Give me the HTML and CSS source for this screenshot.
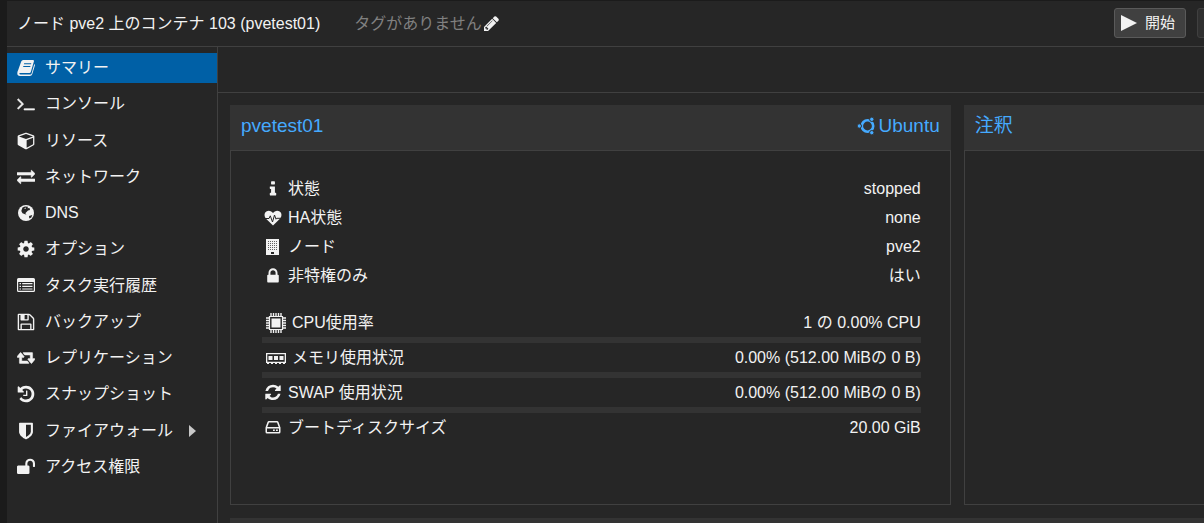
FILE: index.html
```html
<!DOCTYPE html>
<html lang="ja">
<head>
<meta charset="utf-8">
<meta name="viewport" content="width=device-width, initial-scale=1">
<title>pvetest01</title>
<link rel="stylesheet" href="styles.css">
</head>
<body>
<div class="app">
  <header class="header">
    <h1 class="title">ノード pve2 上のコンテナ 103 (pvetest01)</h1>
    <div class="tags">
      <span>タグがありません</span>
      <button class="tag-edit" type="button" aria-label="タグを編集"><svg class="icon-pencil" viewBox="128 128 1536 1536"><path d="M491 1536l91-91-235-235-91 91v107h128v128h107zm523-928q0-22-22-22-10 0-17 7l-542 542q-7 7-7 17 0 22 22 22 10 0 17-7l542-542q7-7 7-17zm-54-192l416 416-832 832h-416v-416zm683 96q0 53-37 90l-166 166-416-416 166-165q36-38 90-38 53 0 91 38l235 234q37 39 37 91z"/></svg></button>
    </div>
    <div class="actions">
      <button class="button" type="button"><svg class="icon-play" viewBox="0 0 16 16"><path d="M0 0L16 8L0 16z"/></svg>開始</button>
      <button class="button button-disabled" type="button" disabled aria-label="シャットダウン"><svg class="icon-play" viewBox="0 0 16 16"><path d="M4 3a7 7 0 1 0 8 0M8 0v8" fill="none" stroke="currentColor" stroke-width="2"/></svg></button>
    </div>
  </header>

  <nav class="nav">
    <a class="nav-item nav-selected" href="#summary"><svg class="icon" viewBox="0 0 18 18"><path fill-rule="evenodd" d="M6.200 1H16Q17.300 1 16.900 2.500L13.800 13Q13.500 14 12.500 14H3Q2.200 14 2.300 14.800Q2.500 15.500 3.500 15.500H13.300Q14.300 15.500 14.600 14.500L17.300 5Q18.200 5.500 17.800 6.800L15.300 15Q14.700 17 12.800 17H3Q.2 17 .3 14Q.4 12.500 1.200 11L4.200 2.500Q4.800 1 6.200 1zM7.200 4.300L6.900 5.300H14L14.300 4.300zM6.400 7L6.100 8H13.200L13.500 7z"/></svg>サマリー</a>
    <a class="nav-item" href="#console"><svg class="icon" viewBox="32 192 1728 1536"><path stroke="currentColor" stroke-width="60" d="M649 983l-466 466q-10 10-23 10t-23-10l-50-50q-10-10-10-23t10-23l393-393-393-393q-10-10-10-23t10-23l50-50q10-10 23-10t23 10l466 466q10 10 10 23t-10 23zm1079 457v64q0 14-9 23t-23 9h-960q-14 0-23-9t-9-23v-64q0-14 9-23t23-9h960q14 0 23 9t9 23z"/></svg>コンソール</a>
    <a class="nav-item" href="#resources"><svg class="icon" viewBox="0 64 1664 1792"><path d="M896 1629l640-349v-636l-640 233v752zm-64-865l698-254-698-254-698 254zm832-252v768q0 35-18 65t-49 47l-704 384q-28 16-61 16t-61-16l-704-384q-31-17-49-47t-18-65v-768q0-40 23-73t61-47l704-256q22-8 44-8t44 8l704 256q38 14 61 47t23 73z"/></svg>リソース</a>
    <a class="nav-item" href="#network"><svg class="icon" viewBox="0 64 1792 1792"><path stroke="currentColor" stroke-width="50" d="M1792 1184v192q0 13-9.500 22.500t-22.500 9.500h-1376v192q0 13-9.500 22.500t-22.500 9.500q-12 0-24-10l-319-320q-9-9-9-22 0-14 9-23l320-320q9-9 23-9 13 0 22.500 9.500t9.500 22.500v192h1376q13 0 22.500 9.500t9.500 22.500zm0-544q0 14-9 23l-320 320q-9 9-23 9-13 0-22.500-9.500t-9.500-22.500v-192h-1376q-13 0-22.500-9.500t-9.500-22.500v-192q0-13 9.500-22.500t22.500-9.500h1376v-192q0-14 9-23t23-9q12 0 24 10l319 319q9 9 9 23z"/></svg>ネットワーク</a>
    <a class="nav-item" href="#dns"><svg class="icon" viewBox="0 0 18 18"><circle cx="9" cy="9" r="8"/><path class="cut" d="M5.500 3.500L8 2.500L11 2.800L10.500 4.200L12.500 4L13 6L11 6.500L9.500 8L8.300 9.200L9.500 10.500L8 10.300L5.500 9.200L4.300 7L4.800 5.500zM12 12L15.300 11L14.300 13.400L12.300 14.400z"/><path d="M7 4.200L9 3.500L8.500 5z"/></svg>DNS</a>
    <a class="nav-item" href="#options"><svg class="icon" viewBox="64 64 1664 1664"><path d="M1152 896q0-106-75-181t-181-75-181 75-75 181 75 181 181 75 181-75 75-181zm512-109v222q0 12-8 23t-20 13l-185 28q-19 54-39 91 35 50 107 138 10 12 10 25t-9 23q-27 37-99 108t-94 71q-12 0-26-9l-138-108q-44 23-91 38-16 136-29 186-7 28-36 28h-222q-14 0-24.500-8.500t-11.500-21.500l-28-184q-49-16-90-37l-141 107q-10 9-25 9-14 0-25-11-126-114-165-168-7-10-7-23 0-12 8-23 15-21 51-66.500t54-70.500q-27-50-41-99l-183-27q-13-2-21-12.500t-8-23.500v-222q0-12 8-23t19-13l186-28q14-46 39-92-40-57-107-138-10-12-10-24 0-10 9-23 26-36 98.500-107.500t94.500-71.500q13 0 26 10l138 107q44-23 91-38 16-136 29-186 7-28 36-28h222q14 0 24.500 8.500t11.500 21.500l28 184q49 16 90 37l142-107q9-9 24-9 13 0 25 10 129 119 165 170 7 8 7 22 0 12-8 23-15 21-51 66.500t-54 70.500q26 50 41 98l183 28q13 2 21 12.500t8 23.500z"/></svg>オプション</a>
    <a class="nav-item" href="#tasks"><svg class="icon" viewBox="0 1 18 18"><path fill-rule="evenodd" d="M1.500 2H16.500Q18 2 18 3.500V14.500Q18 16 16.500 16H1.500Q0 16 0 14.500V3.500Q0 2 1.500 2zM1.200 6V14.300Q1.200 14.800 1.700 14.800H16.300Q16.800 14.800 16.800 14.300V6zM2.500 7H4V8.200H2.500zM5.200 7H15.500V8.200H5.200zM2.500 9.700H4V10.900H2.500zM5.200 9.700H15.500V10.900H5.200zM2.500 12.400H4V13.600H2.500zM5.200 12.400H15.500V13.600H5.200z"/></svg>タスク実行履歴</a>
    <a class="nav-item" href="#backup"><svg class="icon" viewBox="64 64 1664 1664"><path d="M512 1536h768v-384h-768v384zm896 0h128v-896q0-14-10-38.500t-20-34.500l-281-281q-10-10-34-20t-39-10v416q0 40-28 68t-68 28h-576q-40 0-68-28t-28-68v-416h-128v1280h128v-416q0-40 28-68t68-28h832q40 0 68 28t28 68v416zm-384-928v-320q0-13-9.500-22.500t-22.500-9.500h-192q-13 0-22.500 9.500t-9.500 22.500v320q0 13 9.500 22.500t22.500 9.500h192q13 0 22.500-9.500t9.500-22.500zm640 32v928q0 40-28 68t-68 28h-1344q-40 0-68-28t-28-68v-1344q0-40 28-68t68-28h928q40 0 88 20t76 48l280 280q28 28 48 76t20 88z"/></svg>バックアップ</a>
    <a class="nav-item" href="#replication"><svg class="icon" viewBox="0 64 1920 1792"><path stroke="currentColor" stroke-width="50" d="M1280 1504q0 13-9.500 22.500t-22.500 9.500h-960q-8 0-13.500-2t-9-7-5.500-8-3-11.500-1-11.500v-600h-192q-26 0-45-19t-19-45q0-24 15-41l320-384q19-22 49-22t49 22l320 384q15 17 15 41 0 26-19 45t-45 19h-192v384h576q16 0 25 11l160 192q7 10 7 21zm640-416q0 24-15 41l-320 384q-20 23-49 23t-49-23l-320-384q-15-17-15-41 0-26 19-45t45-19h192v-384h-576q-16 0-25-12l-160-192q-7-9-7-20 0-13 9.500-22.500t22.500-9.500h960q8 0 13.500 2t9 7 5.500 8 3 11.500 1 11.500v600h192q26 0 45 19t19 45z"/></svg>レプリケーション</a>
    <a class="nav-item" href="#snapshots"><svg class="icon" viewBox="64 64 1664 1664"><path d="M1664 896q0 156-61 298t-164 245-245 164-298 61q-172 0-327-72.500t-264-204.500q-7-10-6.500-22.500t8.500-20.500l137-138q10-9 25-9 16 2 23 12 73 95 179 147t225 52q104 0 198.500-40.500t163.500-109.500 109.500-163.500 40.500-198.500-40.500-198.500-109.500-163.500-163.500-109.500-198.500-40.500q-98 0-188 35.500t-160 101.500l137 138q31 30 14 69-17 40-59 40h-448q-26 0-45-19t-19-45v-448q0-42 40-59 39-17 69 14l130 129q107-101 244.500-156.500t284.500-55.500q156 0 298 61t245 164 164 245 61 298zm-640-288v448q0 14-9 23t-23 9h-320q-14 0-23-9t-9-23v-64q0-14 9-23t23-9h224v-352q0-14 9-23t23-9h64q14 0 23 9t9 23z"/></svg>スナップショット</a>
    <a class="nav-item" href="#firewall"><svg class="icon" viewBox="64 64 1664 1664"><path d="M1344 960v-640h-448v1137q119-63 213-137 235-184 235-360zm192-768v768q0 86-33.500 170.500t-83 150-118 127.500-126.500 103-121 77.500-89.500 49.500-42.500 20q-12 6-26 6t-26-6q-16-7-42.500-20t-89.500-49.500-121-77.500-126.500-103-118-127.500-83-150-33.500-170.500v-768q0-26 19-45t45-19h1152q26 0 45 19t19 45z"/></svg>ファイアウォール<svg class="nav-arrow" viewBox="0 0 7 12"><path d="M0 0L7 6L0 12z"/></svg></a>
    <a class="nav-item" href="#permissions"><svg class="icon" viewBox="64 64 1664 1664"><path d="M1728 576v256q0 26-19 45t-45 19h-64q-26 0-45-19t-19-45v-256q0-106-75-181t-181-75-181 75-75 181v192h96q40 0 68 28t28 68v576q0 40-28 68t-68 28h-960q-40 0-68-28t-28-68v-576q0-40 28-68t68-28h672v-192q0-185 131.500-316.500t316.500-131.500 316.500 131.500 131.500 316.500z"/></svg>アクセス権限</a>
  </nav>

  <main class="main">
    <div class="toolbar"></div>
    <div class="cards">
      <section class="card">
        <div class="card-head">
          <h2 class="card-title">pvetest01</h2>
          <div class="distro"><svg class="icon-ubuntu" viewBox="0 0 18 18"><circle cx="10.500" cy="9" r="5.700" fill="none" stroke="currentColor" stroke-width="2.600"/><g class="ring-gap"><circle cx="2.300" cy="9" r="2.200"/><circle cx="14.800" cy="2.300" r="2.200"/><circle cx="14.800" cy="15.700" r="2.200"/></g></svg>Ubuntu</div>
        </div>
        <div class="card-body">
          <div class="facts">
            <div class="row"><span class="label"><svg class="icon-fact" viewBox="0 0 1792 1792"><path d="M1216 1344v128q0 26-19 45t-45 19h-512q-26 0-45-19t-19-45v-128q0-26 19-45t45-19h64v-384h-64q-26 0-45-19t-19-45v-128q0-26 19-45t45-19h384q26 0 45 19t19 45v576h64q26 0 45 19t19 45zm-128-1152v192q0 26-19 45t-45 19h-256q-26 0-45-19t-19-45v-192q0-26 19-45t45-19h256q26 0 45 19t19 45z"/></svg>状態</span><span>stopped</span></div>
            <div class="row"><span class="label"><svg class="icon-fact" viewBox="0 0 18 18"><path d="M9 16.500L1.800 9.500Q-.4 6.500 1.200 3.500Q3 1.200 6 1.900Q7.800 2.400 9 4Q10.200 2.400 12 1.900Q15 1.200 16.800 3.500Q18.400 6.500 16.200 9.500z"/><path class="cut-line" d="M1 9.500H5L6.300 6.800L8.500 13L10.500 6L12 10.200L12.700 9.300H17"/></svg>HA状態</span><span>none</span></div>
            <div class="row"><span class="label"><svg class="icon-fact" viewBox="0 0 18 18"><path d="M2 1H15V17H2z"/><path class="cut-line cut-dots" d="M4 3.500H14M4 5.500H14M4 7.500H14M4 9.500H14M4 11.500H14"/><path class="cut" d="M7 14H10V16H7z"/></svg>ノード</span><span>pve2</span></div>
            <div class="row"><span class="label"><svg class="icon-fact" viewBox="0 0 1792 1792"><path d="M640 768h512v-192q0-106-75-181t-181-75-181 75-75 181v192zm832 96v576q0 40-28 68t-68 28h-960q-40 0-68-28t-28-68v-576q0-40 28-68t68-28h32v-192q0-184 132-316t316-132 316 132 132 316v192h32q40 0 68 28t28 68z"/></svg>非特権のみ</span><span>はい</span></div>
          </div>
          <div class="usage">
            <div class="row"><label class="label" for="cpu"><svg class="icon-wide" viewBox="0 0 20 20"><path d="M5.500 5.500H14.500V14.500H5.500z"/><path fill="none" stroke="currentColor" stroke-width="1.200" d="M3.500 3.500H16.500V16.500H3.500z"/><path fill="none" stroke="currentColor" stroke-width="1.400" d="M5 0V3M7.500 0V3M10 0V3M12.500 0V3M15 0V3M5 17V20M7.500 17V20M10 17V20M12.500 17V20M15 17V20M0 5H3M0 7.500H3M0 10H3M0 12.500H3M0 15H3M17 5H20M17 7.500H20M17 10H20M17 12.500H20M17 15H20"/></svg>CPU使用率</label><span>1 の 0.00% CPU</span></div>
            <progress class="bar" id="cpu" value="0" max="100"></progress>
            <div class="row"><label class="label" for="memory"><svg class="icon-wide" viewBox="0 0 20 20"><path fill-rule="evenodd" d="M0 5H20V15H19V16H17V15H15V16H13V15H11V16H9V15H7V16H5V15H3V16H1V15H0zM1.300 6.300V13.700H18.700V6.300z"/><path d="M2.500 8H6.500V12H2.500zM8 8H12V12H8zM13.500 8H17.500V12H13.500z"/></svg>メモリ使用状況</label><span>0.00% (512.00 MiBの 0 B)</span></div>
            <progress class="bar" id="memory" value="0" max="100"></progress>
            <div class="row"><label class="label" for="swap"><svg class="icon-fact" viewBox="0 64 1792 1792"><path d="M1639 1056q0 5-1 7-64 268-268 434.500t-478 166.500q-146 0-282.500-55t-243.500-157l-129 129q-19 19-45 19t-45-19-19-45v-448q0-26 19-45t45-19h448q26 0 45 19t19 45-19 45l-137 137q71 66 161 102t187 36q134 0 250-65t186-179q11-17 53-117 8-23 30-23h192q13 0 22.500 9.500t9.500 22.500zm25-800v448q0 26-19 45t-45 19h-448q-26 0-45-19t-19-45 19-45l138-138q-148-137-349-137-134 0-250 65t-186 179q-11 17-53 117-8 23-30 23h-199q-13 0-22.500-9.500t-9.500-22.500v-7q65-268 270-434.500t480-166.500q146 0 284 55.500t245 156.500l130-129q19-19 45-19t45 19 19 45z"/></svg>SWAP 使用状況</label><span>0.00% (512.00 MiBの 0 B)</span></div>
            <progress class="bar" id="swap" value="0" max="100"></progress>
            <div class="row"><span class="label"><svg class="icon-fact" viewBox="0 1 18 18"><path fill-rule="evenodd" d="M5 3H13Q14.200 3 14.600 4.200L16.500 9.500V14Q16.500 15.500 15 15.500H3Q1.500 15.500 1.500 14V9.500L3.400 4.200Q3.800 3 5 3zM5 4.400L3.300 9H14.700L13 4.400zM3 10.500V14H15V10.500z"/><path d="M9 11.500H10.800V13H9zM12 11.500H13.800V13H12z"/></svg>ブートディスクサイズ</span><span>20.00 GiB</span></div>
          </div>
        </div>
      </section>
      <section class="card card-open">
        <div class="card-head">
          <h2 class="card-title">注釈</h2>
        </div>
      </section>
      <section class="card card-full">
        <div class="card-head"></div>
      </section>
    </div>
  </main>
</div>
</body>
</html>
```

FILE: styles.css
```css
* {
  box-sizing: border-box;
}

body {
  margin: 0;
  background: #1b1b1b;
  color: #f2f2f2;
  font: 16px/24px "Liberation Sans", "Noto Sans CJK JP", sans-serif;
}

svg {
  fill: currentColor;
  flex: none;
}

h1,
h2 {
  margin: 0;
  font-weight: normal;
}

button {
  font: inherit;
  color: inherit;
}

.app {
  display: grid;
  grid-template: auto 1fr / 211px minmax(0, 1fr);
  height: 100vh;
  overflow: hidden;
  margin-left: 7px;
  border-top: 1px solid #1b1b1b;
  background: #262626;
}

.header {
  grid-column: 1 / -1;
  display: flex;
  align-items: center;
  height: 46px;
  padding-left: 10px;
  border-bottom: 1px solid #404040;
  white-space: nowrap;
}

.title {
  font-size: 16px;
}

.tags {
  display: flex;
  align-items: center;
  flex: 1;
  margin-left: 34px;
  color: #808080;
}

.tag-edit {
  display: flex;
  padding: 0 0 0 2px;
  border: 0;
  background: none;
  color: #f2f2f2;
}

.icon-pencil {
  width: 15px;
  height: 15px;
}

.actions {
  display: flex;
  align-self: flex-start;
  flex: 0 0 90px;
  gap: 11px;
  overflow: hidden;
  padding-top: 7px;
}

.button {
  display: flex;
  align-items: center;
  flex: 0 0 72px;
  gap: 8px;
  height: 30px;
  padding: 0 6px;
  border: 1px solid #5a5a5a;
  border-radius: 3px;
  background: #404040;
  font-size: 15px;
}

.button-disabled {
  border-color: #404040;
  background: #303030;
  color: #808080;
}

.icon-play {
  width: 16px;
  height: 16px;
}

.nav {
  display: flex;
  flex-direction: column;
  justify-content: space-between;
  align-self: start;
  min-height: 435px;
  padding-top: 6px;
}

.nav-item {
  display: flex;
  align-items: center;
  gap: 10px;
  height: 30px;
  margin-right: 1px;
  padding-left: 10px;
  color: inherit;
  text-decoration: none;
  white-space: nowrap;
}

.nav-selected {
  background: #0060a6;
}

.icon {
  width: 18px;
  height: 18px;
}

.nav-arrow {
  width: 7px;
  height: 12px;
  margin-left: 6px;
  color: #c8c8c8;
}

.cut {
  fill: #262626;
}

.cut-line {
  fill: none;
  stroke: #262626;
  stroke-width: 1;
}

.cut-dots {
  stroke: #606060;
  stroke-dasharray: 1 1;
}

.ring-gap {
  stroke: #333333;
  stroke-width: 1;
}

.main {
  margin-left: -1px;
  border-left: 1px solid #404040;
  overflow: hidden;
}

.toolbar {
  height: 46px;
  border-bottom: 1px solid #404040;
}

.cards {
  display: grid;
  grid-template-columns: minmax(0, 3fr) minmax(0, 1fr);
  gap: 13px;
  padding: 12px 0 0 12px;
}

.card {
  border: 1px solid #404040;
  border-top: 0;
}

.card-open {
  border-right: 0;
}

.card-full {
  grid-column: 1 / -1;
  border-color: #333333;
}

.card-head {
  display: flex;
  align-items: flex-start;
  justify-content: space-between;
  min-height: 46px;
  margin: 0 -1px;
  padding: 9px 11px;
  border-bottom: 1px solid #404040;
  background: #333333;
  color: #45aaff;
  font-size: 19px;
}

.card-title {
  font-size: 19px;
}

.distro {
  display: flex;
  align-items: center;
  gap: 3px;
}

.icon-ubuntu {
  width: 18px;
  height: 18px;
}

.card-body {
  padding: 23px 29px 62px 31px;
}

.usage {
  margin-top: 18px;
}

.row {
  display: flex;
  align-items: center;
  justify-content: space-between;
  height: 29px;
  white-space: nowrap;
}

.label {
  display: flex;
  align-items: center;
  gap: 6px;
}

.icon-fact {
  width: 18px;
  height: 18px;
  margin-left: 2px;
}

.icon-wide {
  width: 20px;
  height: 20px;
  margin-left: 4px;
}

.bar {
  display: block;
  width: 100%;
  height: 6px;
  border: 0;
  appearance: none;
  background: #333333;
}

.bar::-webkit-progress-bar {
  background: #333333;
}

.bar::-webkit-progress-value {
  background: #45aaff;
}
```
